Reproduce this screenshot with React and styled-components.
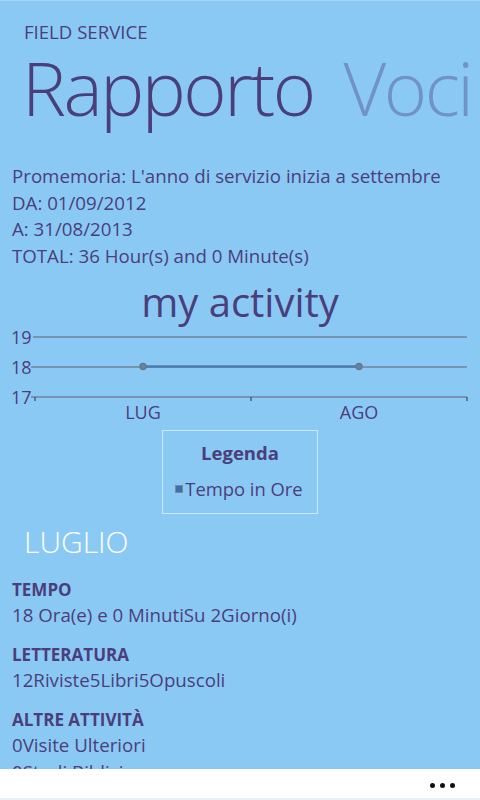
import React from "react";
import styled, { createGlobalStyle } from "styled-components";

const Global = createGlobalStyle`
  html, body { margin: 0; padding: 0; }
  body { font-family: "Open Sans", "Noto Sans", sans-serif; background: #8bc9f5; }
`;

const Page = styled.div`
  width: 480px;
  height: 800px;
  display: flex;
  flex-direction: column;
  background: #8bc9f5;
  border-top: 1px solid #a3d4f7;
  box-sizing: border-box;
  overflow: hidden;
  color: #4a3e7b;
`;

const Content = styled.div`
  flex: 1;
  overflow: hidden;
  display: flex;
  flex-direction: column;
`;

const AppTitle = styled.div`
  font-size: 18.6px;
  margin: 20px 0 0 24px;
  line-height: 22px;
`;

const Pivot = styled.div`
  display: flex;
  gap: 30px;
  margin: 4px 0 0 22px;
  font-weight: 300;
  font-size: 74px;
  line-height: 82px;
  white-space: nowrap;
  letter-spacing: -2.5px;
`;

const PivotItem = styled.span`
  color: ${(p) => (p.$active ? "#4a3e7b" : "#7092c6")};
`;

const Info = styled.div`
  margin: 34px 0 0 12px;
  font-size: 18.7px;
  line-height: 26.5px;
`;

const ChartTitle = styled.div`
  text-align: center;
  font-size: 40px;
  line-height: 46px;
  margin-top: 10px;
`;

const ChartBox = styled.div`
  height: 100px;
`;

const Legend = styled.div`
  align-self: center;
  width: 156px;
  height: 84px;
  box-sizing: border-box;
  border: 1.5px solid rgba(255, 255, 255, 0.55);
  display: flex;
  flex-direction: column;
  align-items: center;
  margin-top: 5px;
  flex-shrink: 0;
`;

const LegendTitle = styled.div`
  font-weight: 700;
  font-size: 18.5px;
  margin-top: 11px;
  line-height: 22px;
`;

const LegendItem = styled.div`
  display: flex;
  align-items: center;
  gap: 2px;
  font-size: 18.4px;
  margin-top: 14px;
  line-height: 22px;
  margin-left: -2px;
`;

const Swatch = styled.span`
  width: 6px;
  height: 6px;
  background: #3f6fa8;
  border: 1px solid #7a8898;
`;

const Month = styled.div`
  color: #ffffff;
  font-size: 30px;
  font-weight: 300;
  margin: 10px 0 0 24px;
  line-height: 36px;
`;

const Section = styled.div`
  margin: ${(p) => (p.$first ? "19px" : "16px")} 0 0 12px;
`;

const SectionHead = styled.div`
  font-weight: 700;
  font-size: 17px;
  line-height: 22px;
`;

const SectionLine = styled.div`
  font-size: 18.7px;
  line-height: 26px;
  margin-top: 1px;
`;

const AppBar = styled.div`
  height: 31px;
  flex-shrink: 0;
  background: #ffffff;
  display: flex;
  justify-content: flex-end;
  align-items: center;
  padding-right: 25px;
  border-bottom: 2px solid #e4f2fc;
  box-sizing: border-box;
`;

const Dots = styled.div`
  display: flex;
  gap: 5px;
  margin-top: 3px;
`;

const Dot = styled.span`
  width: 5px;
  height: 5px;
  border-radius: 50%;
  background: #111;
`;

function Chart() {
  const grid = "#6f8497";
  const lab = "#4a3e7b";
  return (
    <svg width="480" height="100" viewBox="0 0 480 100">
      <g fontFamily="'Open Sans', sans-serif" fontSize="18" fill={lab}>
        <text x="11" y="18.5">19</text>
        <text x="11" y="48.5">18</text>
        <text x="11" y="78.5">17</text>
      </g>
      <line x1="33" y1="12" x2="467" y2="12" stroke={grid} strokeWidth="1.5" />
      <line x1="31" y1="42" x2="467" y2="42" stroke={grid} strokeWidth="1.5" />
      <line x1="31" y1="72" x2="467" y2="72" stroke={grid} strokeWidth="1.5" />
      <line x1="35" y1="72" x2="35" y2="76" stroke="#333" strokeWidth="1" />
      <line x1="251" y1="72" x2="251" y2="76" stroke="#333" strokeWidth="1" />
      <line x1="467" y1="72" x2="467" y2="76" stroke="#333" strokeWidth="1" />
      <line x1="143" y1="41.5" x2="359" y2="41.5" stroke="#4a7cb2" strokeWidth="2.5" />
      <circle cx="143" cy="41.5" r="3" fill="#5f86aa" stroke="#6b7482" strokeWidth="1.3" />
      <circle cx="359" cy="41.5" r="3" fill="#5f86aa" stroke="#6b7482" strokeWidth="1.3" />
      <g fontFamily="'Open Sans', sans-serif" fontSize="18" fill={lab} textAnchor="middle">
        <text x="143" y="94">LUG</text>
        <text x="359" y="94">AGO</text>
      </g>
    </svg>
  );
}

export default function App() {
  return (
    <>
      <Global />
      <Page>
        <Content>
          <AppTitle>FIELD SERVICE</AppTitle>
          <Pivot>
            <PivotItem $active>Rapporto</PivotItem>
            <PivotItem>Voci</PivotItem>
          </Pivot>
          <Info>
            <div>Promemoria: L'anno di servizio inizia a settembre</div>
            <div>DA: 01/09/2012</div>
            <div>A: 31/08/2013</div>
            <div>TOTAL: 36 Hour(s) and 0 Minute(s)</div>
          </Info>
          <ChartTitle>my activity</ChartTitle>
          <ChartBox>
            <Chart />
          </ChartBox>
          <Legend>
            <LegendTitle>Legenda</LegendTitle>
            <LegendItem>
              <Swatch />
              Tempo in Ore
            </LegendItem>
          </Legend>
          <Month>LUGLIO</Month>
          <Section $first>
            <SectionHead>TEMPO</SectionHead>
            <SectionLine>18 Ora(e) e 0 MinutiSu 2Giorno(i)</SectionLine>
          </Section>
          <Section>
            <SectionHead>LETTERATURA</SectionHead>
            <SectionLine>12Riviste5Libri5Opuscoli</SectionLine>
          </Section>
          <Section>
            <SectionHead>ALTRE ATTIVITÀ</SectionHead>
            <SectionLine>0Visite Ulteriori</SectionLine>
            <SectionLine>0Studi Biblici</SectionLine>
          </Section>
        </Content>
        <AppBar>
          <Dots>
            <Dot />
            <Dot />
            <Dot />
          </Dots>
        </AppBar>
      </Page>
    </>
  );
}
